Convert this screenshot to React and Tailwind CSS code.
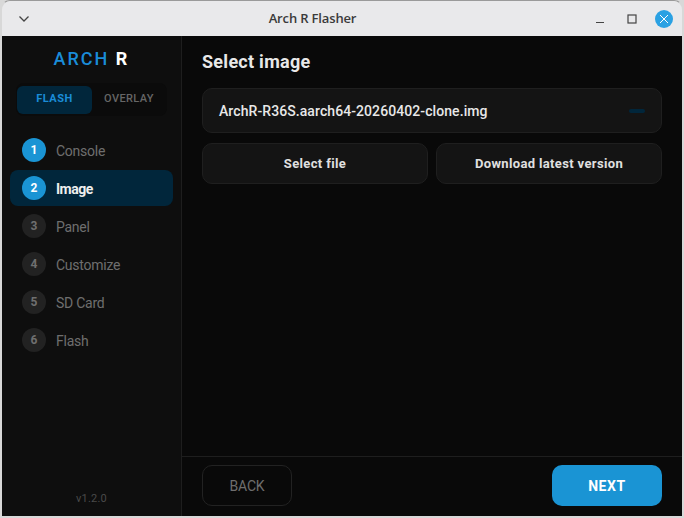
import React from "react";

const steps = [
  { n: 1, label: "Console", state: "done" },
  { n: 2, label: "Image", state: "active" },
  { n: 3, label: "Panel" },
  { n: 4, label: "Customize" },
  { n: 5, label: "SD Card" },
  { n: 6, label: "Flash" },
];

const font = "font-['Roboto',sans-serif]";

const StepRow = ({ n, label, state }) => {
  const active = state === "active";
  const lit = active || state === "done";
  return (
    <div
      className={`flex h-9 items-center gap-[10px] rounded-lg px-3 ${active ? "bg-[#01263b]" : ""}`}
    >
      <div
        className={`flex h-6 w-6 items-center justify-center rounded-full text-xs font-bold ${
          lit ? "bg-[#1a94d4] text-white" : "bg-[#222222] text-[#6f6f6f]"
        }`}
      >
        {n}
      </div>
      <span
        className={`pt-[1px] text-sm ${active ? "font-bold tracking-[-0.5px] text-[#eeeeee]" : "font-normal tracking-[-0.25px] text-[#6e6e6e]"}`}
      >
        {label}
      </span>
    </div>
  );
};

const App = () => {
  return (
    <div className={`flex h-[518px] w-[684px] flex-col overflow-hidden bg-[#d8d8d8] ${font}`}>
      <div className="flex h-full flex-col overflow-hidden rounded-t-[10px] border-x-2 border-t border-b-2 border-x-[#d8d8d8] border-t-[#9a9a9a] border-b-[#d8d8d8]">
        {/* titlebar */}
        <header className="flex h-[35px] shrink-0 items-center bg-[#e9e9eb] pl-4 pr-[9px]">
          <svg width="12" height="12" viewBox="0 0 12 12" fill="none" stroke="#444444" strokeWidth="1.3">
            <path d="M1.5 3.5 6 8l4.5-4.5" />
          </svg>
          <span className="flex-1 text-center font-['Open_Sans',sans-serif] text-[13px] font-semibold tracking-[-0.15px] text-[#3a3a3a]">
            Arch R Flasher
          </span>
          <div className="flex items-center">
            <svg width="10" height="10" viewBox="0 0 10 10" className="mr-[22px]" stroke="#444444" strokeWidth="1.2">
              <path d="M1 8.5h8" />
            </svg>
            <svg width="10" height="10" viewBox="0 0 10 10" className="mr-[18px]" fill="none" stroke="#444444" strokeWidth="1.2">
              <rect x="1" y="1" width="8" height="8" />
            </svg>
            <div className="flex h-[18px] w-[18px] items-center justify-center rounded-full bg-[#2aa1e3]">
              <svg width="10" height="10" viewBox="0 0 10 10" stroke="#ffffff" strokeWidth="1">
                <path d="M1 1l8 8M9 1l-8 8" />
              </svg>
            </div>
          </div>
        </header>

        <div className="flex min-h-0 flex-1">
          {/* sidebar */}
          <aside className="flex w-[180px] shrink-0 flex-col border-r border-[#1e1e1e] bg-[#0e0e0e]">
            <div className="mt-[11px] text-center text-[18px] font-medium leading-6 tracking-[2px]">
              <span className="text-[#1a8cd8]">ARCH </span>
              <span className="font-bold text-white">R</span>
            </div>
            <div className="mx-[14px] mt-[12px] flex h-[33px] items-center rounded-lg bg-[#0b0b0b] px-[1px]">
              <div className="flex h-7 w-[75px] items-center justify-center rounded-md bg-[#01263b] text-[11px] font-bold tracking-[0.5px] text-[#1a8cd8]">
                FLASH
              </div>
              <div className="flex h-7 flex-1 items-center justify-center text-[11px] font-medium tracking-[0.4px] text-[#666666]">
                OVERLAY
              </div>
            </div>
            <nav className="mx-2 mt-[16px] flex flex-col gap-[2px]">
              {steps.map((s) => (
                <StepRow key={s.n} {...s} />
              ))}
            </nav>
            <div className="mb-[9px] mt-auto text-center text-[11px] tracking-[0.2px] text-[#4a4a4a]">v1.2.0</div>
          </aside>

          {/* main */}
          <main className="flex min-w-0 flex-1 flex-col bg-[#090909]">
            <div className="flex-1 px-5 pt-[14px]">
              <h1 className="text-lg font-bold leading-6 tracking-[0.27px] text-[#e8e8e8]">Select image</h1>
              <div className="mt-[14px] flex h-[45px] items-center justify-between rounded-[10px] border border-[#1f1f1f] bg-[#141414] pl-4 pr-[16px]">
                <span className="text-sm font-medium tracking-[0.08px] text-[#e8e8e8]">
                  ArchR-R36S.aarch64-20260402-clone.img
                </span>
                <div className="h-1 w-4 rounded-full bg-[#01263b]" />
              </div>
              <div className="mt-[10px] flex gap-2">
                <button className="h-[41px] flex-1 rounded-[10px] border border-[#1f1f1f] bg-[#141414] text-[13px] font-bold tracking-[0.35px] text-[#e0e0e0]">
                  Select file
                </button>
                <button className="h-[41px] flex-1 rounded-[10px] border border-[#1f1f1f] bg-[#141414] text-[13px] font-bold tracking-[0.35px] text-[#e0e0e0]">
                  Download latest version
                </button>
              </div>
            </div>
            <footer className="flex h-[60px] items-start justify-between border-t border-[#1e1e1e] px-5 pt-2">
              <button className="h-[41px] w-[90px] rounded-[10px] border border-[#222222] text-sm font-normal tracking-[-0.2px] text-[#6e6e6e]">
                BACK
              </button>
              <button className="h-[41px] w-[110px] rounded-[10px] bg-[#1a94d4] text-sm font-bold tracking-[0.6px] text-white">
                NEXT
              </button>
            </footer>
          </main>
        </div>
      </div>
    </div>
  );
};

export default App;
